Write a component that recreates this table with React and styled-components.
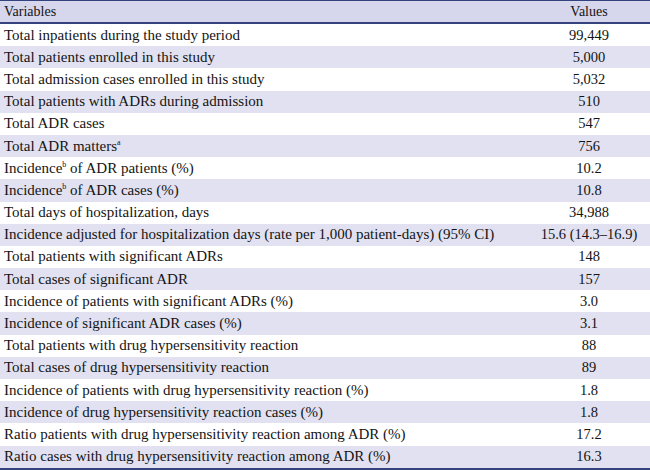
import styled, { createGlobalStyle } from "styled-components";

const GlobalStyle = createGlobalStyle`
  html, body {
    margin: 0;
    padding: 0;
    background: #ffffff;
  }
`;

const ROWS = [
  ["Total inpatients during the study period", "99,449"],
  ["Total patients enrolled in this study", "5,000"],
  ["Total admission cases enrolled in this study", "5,032"],
  ["Total patients with ADRs during admission", "510"],
  ["Total ADR cases", "547"],
  [<>Total ADR matters<Sup>a</Sup></>, "756"],
  [<>Incidence<Sup>b</Sup> of ADR patients (%)</>, "10.2"],
  [<>Incidence<Sup>b</Sup> of ADR cases (%)</>, "10.8"],
  ["Total days of hospitalization, days", "34,988"],
  ["Incidence adjusted for hospitalization days (rate per 1,000 patient-days) (95% CI)", "15.6 (14.3–16.9)"],
  ["Total patients with significant ADRs", "148"],
  ["Total cases of significant ADR", "157"],
  ["Incidence of patients with significant ADRs (%)", "3.0"],
  ["Incidence of significant ADR cases (%)", "3.1"],
  ["Total patients with drug hypersensitivity reaction", "88"],
  ["Total cases of drug hypersensitivity reaction", "89"],
  ["Incidence of patients with drug hypersensitivity reaction (%)", "1.8"],
  ["Incidence of drug hypersensitivity reaction cases (%)", "1.8"],
  ["Ratio patients with drug hypersensitivity reaction among ADR (%)", "17.2"],
  ["Ratio cases with drug hypersensitivity reaction among ADR (%)", "16.3"],
];

function Sup({ children }) {
  return <SupText>{children}</SupText>;
}

const App = () => {
  return (
    <>
      <GlobalStyle />
      <Table>
        <HeaderRow>
          <HeaderLabel>Variables</HeaderLabel>
          <HeaderValue>Values</HeaderValue>
        </HeaderRow>
        {ROWS.map(([label, value], i) => (
          <Row key={i} $shaded={i % 2 === 1}>
            <Label>{label}</Label>
            <Value>{value}</Value>
          </Row>
        ))}
      </Table>
    </>
  );
};

const Table = styled.div`
  width: 650px;
  height: 470px;
  display: flex;
  flex-direction: column;
  border-top: 1px solid #34427e;
  border-bottom: 2px solid #34427e;
  box-sizing: border-box;
  font-family: "Liberation Serif", "Times New Roman", serif;
  color: #141414;
`;

const Row = styled.div`
  display: grid;
  grid-template-columns: 1fr 122px;
  align-items: center;
  height: 22.2px;
  flex-shrink: 0;
  background: ${({ $shaded }) => ($shaded ? "#e1e1f1" : "#ffffff")};
`;

const HeaderRow = styled(Row)`
  height: 23px;
  background: #d6d6ec;
  border-bottom: 2px solid #34427e;
  box-sizing: border-box;
`;

const Label = styled.div`
  padding-left: 4px;
  font-size: 15px;
  white-space: nowrap;
`;

const Value = styled.div`
  text-align: center;
  font-size: 14.5px;
  white-space: nowrap;
`;

const HeaderLabel = styled(Label)`
  font-size: 14px;
`;

const HeaderValue = styled(Value)`
  font-size: 14px;
`;

const SupText = styled.sup`
  font-size: 8px;
  vertical-align: 6px;
  line-height: 0;
`;

export default App;
